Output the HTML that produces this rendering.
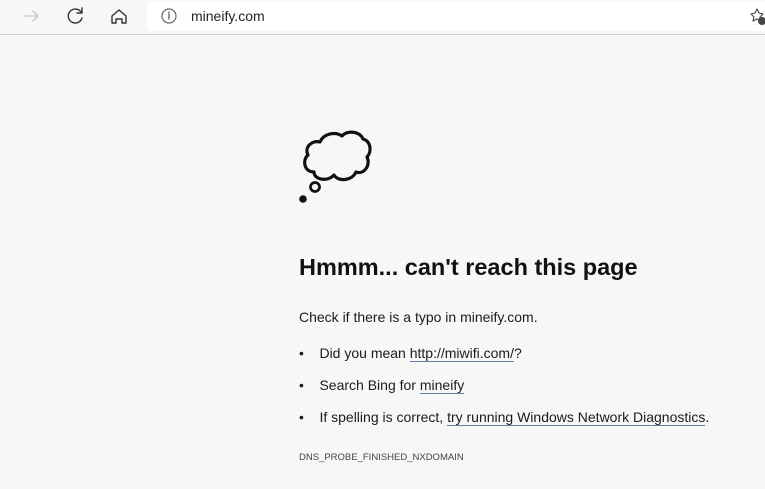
<!DOCTYPE html>
<html><head><meta charset="utf-8"><style>
body{margin:0;width:765px;height:489px;background:#f7f7f7;font-family:"Liberation Sans",sans-serif;position:relative;overflow:hidden;color:#1b1b1b}
.bar{position:absolute;left:0;top:0;width:765px;height:34px;background:#f7f7f7;border-bottom:1px solid #d0d0d0}
.addr{position:absolute;left:147px;top:2px;width:630px;height:29px;background:#fff;border-radius:4px}
.t{position:absolute;white-space:nowrap;font-size:14px}
a{color:#1b1b1b;text-decoration:none;border-bottom:1px solid #5a7fa8}
</style></head><body>
<div class="bar">
<div class="addr"></div>
<svg width="765" height="34" style="position:absolute;left:0;top:0" fill="none" stroke-linecap="round" stroke-linejoin="round">
<path d="M24 16h14M33 11l5 5-5 5" stroke="#c8c8c8" stroke-width="1.3"/>
<path d="M81 12a7 7 0 1 0 1 6" stroke="#333" stroke-width="1.4"/><path d="M82 8v5h-5" stroke="#333" stroke-width="1.4"/>
<path d="M112 16l7-6 7 6v7h-4v-4h-6v4h-4z" stroke="#333" stroke-width="1.4"/>
<circle cx="169" cy="16" r="7" stroke="#666" stroke-width="1.2"/><path d="M169 14v5M169 12v0.5" stroke="#666" stroke-width="1.4"/>
<path d="M757 9l2 4 4 1-3 3 1 4-4-2-4 2 1-4-3-3 4-1z" stroke="#444" stroke-width="1.1"/>
<circle cx="762" cy="21" r="4" fill="#444"/>
</svg>
<div class="t" style="left:191px;top:8px;font-size:14px;color:#222">mineify.com</div>
</div>
<svg width="100" height="90" style="position:absolute;left:290px;top:120px" fill="none" stroke="#111" stroke-width="3.2" stroke-linejoin="round">
<path d="M30 22C33 14 45 11 52 16C57 10 70 11 73 19C81 21 82 32 77 37C81 45 74 55 66 52C62 61 48 62 44 55C38 62 24 60 24 52C14 52 12 40 18 35C14 27 22 20 30 22Z"/>
<circle cx="25" cy="67" r="4.5" stroke-width="2.8"/>
<circle cx="13" cy="79" r="3.8" fill="#111" stroke="none"/>
</svg>
<div class="t" style="left:299px;top:254px;font-size:23.5px;font-weight:bold;color:#111">Hmmm... can't reach this page</div>
<div class="t" style="left:299px;top:309px">Check if there is a typo in mineify.com.</div>
<div class="t" style="left:299px;top:345px">•&nbsp;&nbsp;&nbsp;&nbsp;Did you mean <a>http://miwifi.com/</a>?</div>
<div class="t" style="left:299px;top:377px">•&nbsp;&nbsp;&nbsp;&nbsp;Search Bing for <a>mineify</a></div>
<div class="t" style="left:299px;top:409px">•&nbsp;&nbsp;&nbsp;&nbsp;If spelling is correct, <a>try running Windows Network Diagnostics</a>.</div>
<div class="t" style="left:299px;top:452px;font-size:9.5px;color:#444">DNS_PROBE_FINISHED_NXDOMAIN</div>
</body></html>
